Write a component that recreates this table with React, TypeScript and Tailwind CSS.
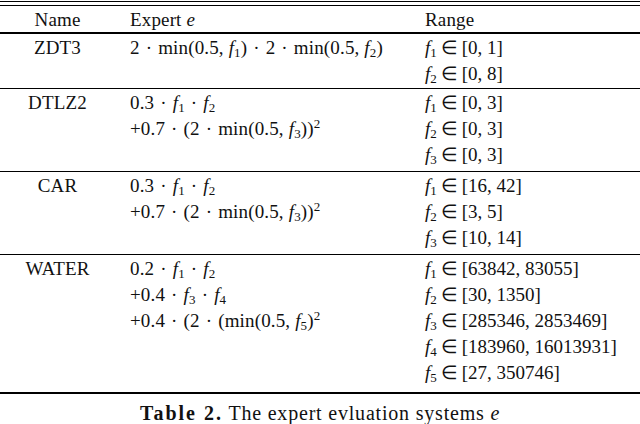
import React from 'react';

// f_i with italic f and subscript index
const F = ({ n }: { n: number }) => (
  <span>
    <i>f</i>
    <sub className="text-[13px]">{n}</sub>
  </span>
);

const Sq = () => <sup className="text-[13px]">2</sup>;

const Dot = () => <span className="mx-[6px]">·</span>;

type Group = {
  name: string;
  expert: React.ReactNode[];
  range: [number, string][];
  pad: string;
};

const groups: Group[] = [
  {
    name: 'ZDT3',
    expert: [
      <>
        2<Dot />min(0.5, <F n={1} />)<Dot />2<Dot />min(0.5, <F n={2} />)
      </>,
    ],
    range: [
      [1, '0, 1'],
      [2, '0, 8'],
    ],
    pad: 'pb-[2px]',
  },
  {
    name: 'DTLZ2',
    expert: [
      <>
        0.3<Dot /><F n={1} /><Dot /><F n={2} />
      </>,
      <>
        +0.7<Dot />(2<Dot />min(0.5, <F n={3} />))<Sq />
      </>,
    ],
    range: [
      [1, '0, 3'],
      [2, '0, 3'],
      [3, '0, 3'],
    ],
    pad: 'pb-[4px]',
  },
  {
    name: 'CAR',
    expert: [
      <>
        0.3<Dot /><F n={1} /><Dot /><F n={2} />
      </>,
      <>
        +0.7<Dot />(2<Dot />min(0.5, <F n={3} />))<Sq />
      </>,
    ],
    range: [
      [1, '16, 42'],
      [2, '3, 5'],
      [3, '10, 14'],
    ],
    pad: 'pb-[4px]',
  },
  {
    name: 'WATER',
    expert: [
      <>
        0.2<Dot /><F n={1} /><Dot /><F n={2} />
      </>,
      <>
        +0.4<Dot /><F n={3} /><Dot /><F n={4} />
      </>,
      <>
        +0.4<Dot />(2<Dot />(min(0.5, <F n={5} />)<Sq />
      </>,
    ],
    range: [
      [1, '63842, 83055'],
      [2, '30, 1350'],
      [3, '285346, 2853469'],
      [4, '183960, 16013931'],
      [5, '27, 350746'],
    ],
    pad: 'pb-[7px]',
  },
];

const Line = ({ children }: { children?: React.ReactNode }) => (
  <div className="h-[26px] flex items-center whitespace-pre">
    <span>{children}</span>
  </div>
);

export default function App() {
  return (
    <div className="w-[640px] h-[424px] bg-white text-[#111] text-[19px] leading-none tracking-[0.15px] font-['Liberation_Serif',serif]">
      {/* top double rule */}
      <div className="pt-[1px]">
        <div className="h-px bg-black" />
        <div className="h-[3px]" />
        <div className="h-px bg-black" />
      </div>

      {/* header */}
      <div className="flex h-[26px] items-center">
        <div className="w-[115px] text-center">Name</div>
        <div className="w-[310px] pl-[15px]">
          Expert <i>e</i>
        </div>
        <div className="flex-1">Range</div>
      </div>
      <div className="h-[2px] bg-black" />

      {groups.map((g, gi) => (
        <div key={g.name}>
          <div className={`flex ${g.pad}`}>
            <div className="w-[115px]">
              <div className="h-[26px] flex items-center justify-center">{g.name}</div>
            </div>
            <div className="w-[310px] pl-[15px]">
              {g.expert.map((e, i) => (
                <Line key={i}>{e}</Line>
              ))}
            </div>
            <div className="flex-1 tracking-normal">
              {g.range.map(([n, r]) => (
                <Line key={n}>
                  <F n={n} />
                  <span className="mx-[4px]">∈</span>[{r}]
                </Line>
              ))}
            </div>
          </div>
          <div className={gi === groups.length - 1 ? 'h-[2px] bg-black' : 'h-px bg-black'} />
        </div>
      ))}

      {/* caption */}
      <div className="flex justify-center pt-[9px] text-[20px] tracking-[0.8px]">
        <span>
          <b className="tracking-[2px]">Table 2.</b> The expert evluation systems <i>e</i>
        </span>
      </div>
    </div>
  );
}
